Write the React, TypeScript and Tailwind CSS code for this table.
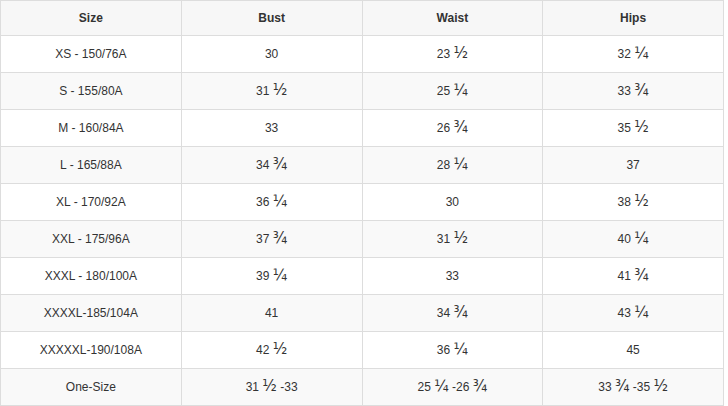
const rows: string[][] = [
  ["XS - 150/76A", "30", "23 ½", "32 ¼"],
  ["S - 155/80A", "31 ½", "25 ¼", "33 ¾"],
  ["M - 160/84A", "33", "26 ¾", "35 ½"],
  ["L - 165/88A", "34 ¾", "28 ¼", "37"],
  ["XL - 170/92A", "36 ¼", "30", "38 ½"],
  ["XXL - 175/96A", "37 ¾", "31 ½", "40 ¼"],
  ["XXXL - 180/100A", "39 ¼", "33", "41 ¾"],
  ["XXXXL-185/104A", "41", "34 ¾", "43 ¼"],
  ["XXXXXL-190/108A", "42 ½", "36 ¼", "45"],
  ["One-Size", "31 ½ -33", "25 ¼ -26 ¾", "33 ¾ -35 ½"],
];

// fraction glyphs are drawn bigger in the original, so bump them up
function Cell({ text }: { text: string }) {
  const parts = text.split(/([½¼¾])/);
  return (
    <>
      {parts.map((p, i) =>
        /[½¼¾]/.test(p) ? (
          <span key={i} className="font-['DejaVu_Sans',sans-serif] text-[15px] leading-none">
            {p}
          </span>
        ) : (
          <span key={i}>{p}</span>
        )
      )}
    </>
  );
}

export default function App() {
  return (
    <div className="bg-white w-[728px] h-[406px] overflow-hidden font-['Liberation_Sans',Arial,sans-serif] text-[12px] text-[#333]">
      <table className="w-[724px] table-fixed border-collapse">
        <thead>
          <tr className="bg-[#f7f7f7] h-[35px]">
            {["Size", "Bust", "Waist", "Hips"].map((h) => (
              <th key={h} className="border border-[#ddd] font-bold text-center p-0">
                {h}
              </th>
            ))}
          </tr>
        </thead>
        <tbody>
          {rows.map((r, i) => (
            <tr key={i} className={`h-[37px] ${i % 2 === 1 ? "bg-[#f9f9f9]" : "bg-white"}`}>
              {r.map((c, j) => (
                <td key={j} className="border border-[#ddd] text-center p-0">
                  <Cell text={c} />
                </td>
              ))}
            </tr>
          ))}
        </tbody>
      </table>
    </div>
  );
}
